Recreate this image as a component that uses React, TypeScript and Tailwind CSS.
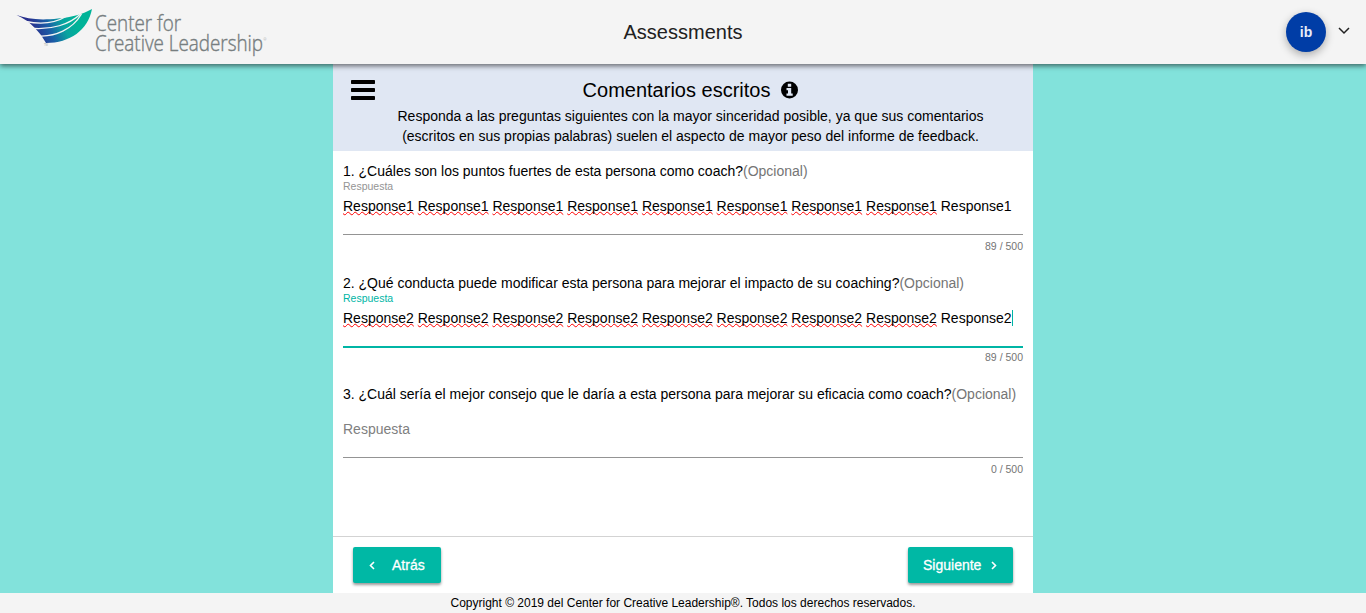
import React from "react";

function Logo() {
  return (
    <svg width="270" height="64" viewBox="0 0 270 64" className="ml-2 block" aria-label="Center for Creative Leadership">
      <defs>
        <linearGradient id="wing" gradientUnits="userSpaceOnUse" x1="27" y1="34" x2="66" y2="18">
          <stop offset="0" stopColor="#28308e" />
          <stop offset="0.35" stopColor="#1b5ca6" />
          <stop offset="0.7" stopColor="#08a3a0" />
          <stop offset="1" stopColor="#00b398" />
        </linearGradient>
      </defs>
      <path fill="url(#wing)" d="M8.500 15C19 19 32 20.500 50 18.500C64 17.500 75 14 84 9C80 30 62 43 38 43C32 32 22 21 8.500 15Z" />
      <g fill="none" stroke="#f4f4f4" strokeWidth="1.300">
        <path d="M18 21.500C33 24.500 48 22.500 58 16.500" />
        <path d="M26 28.500C43 29.500 61 25 72.500 14" />
        <path d="M32 36C47 36.500 64 30 73.500 14" />
      </g>
      <g fill="#777e80" fontFamily="'Open Sans', 'Noto Sans', sans-serif" fontWeight="300">
        <text x="87" y="31" fontSize="21.500" stroke="#777e80" strokeWidth="0.4" textLength="86" lengthAdjust="spacingAndGlyphs">Center for</text>
        <text x="87" y="50.500" fontSize="21.500" stroke="#777e80" strokeWidth="0.4" textLength="168" lengthAdjust="spacingAndGlyphs">Creative Leadership</text>
        <text x="255.200" y="41" fontSize="4">®</text>
        <text x="36" y="46" fontSize="3">TM</text>
      </g>
    </svg>
  );
}

function Header() {
  return (
    <header className="relative z-10 grid h-16 shrink-0 grid-cols-[1fr_auto_1fr] items-center bg-[#f4f4f4] shadow-[0_2px_5px_rgba(0,0,0,0.55)]">
      <Logo />
      <h1 className="text-[20px] leading-6 text-[#212121]">Assessments</h1>
      <div className="flex items-center justify-end pr-4">
        <span className="flex size-10 items-center justify-center rounded-full bg-[#003da6] text-[14px] font-bold text-[#e8edf7] shadow-[0_3px_8px_rgba(0,0,0,0.3)]">ib</span>
        <svg className="ml-3 block" width="12" height="12" viewBox="0 0 12 12" fill="none" stroke="#212121" strokeWidth="1.500">
          <path d="M1 2L6 7L11 2" />
        </svg>
      </div>
    </header>
  );
}

function MenuIcon() {
  return (
    <svg className="mt-4 ml-[18px] block shrink-0" width="24" height="20" viewBox="0 0 24 20">
      <rect width="24" height="4" rx="0.7" />
      <rect y="8" width="24" height="4" rx="0.7" />
      <rect y="16" width="24" height="4" rx="0.7" />
    </svg>
  );
}

function InfoIcon() {
  return (
    <svg className="ml-[11px] block" width="17" height="18" viewBox="0 0 17 18">
      <circle cx="8.500" cy="9" r="8.500" />
      <path fill="#e0e7f3" d="M6.800 2.800H10.200V5.800H6.800ZM5.500 7H10.200V12.500H11.700V14.800H5.500V12.500H7V9.200H5.500Z" />
    </svg>
  );
}

function Misspelled({ children }: { children: string }) {
  return (
    <span className="underline decoration-[#f00] decoration-wavy decoration-[0.5px] underline-offset-0 [text-decoration-skip-ink:none]">
      {children}
    </span>
  );
}

type QuestionProps = { question: string; word?: string; count: number; focused?: boolean };

function Question({ question, word, count, focused = false }: QuestionProps) {
  return (
    <section className="flex flex-col">
      <p className="h-5 leading-5 whitespace-nowrap">
        {question}
        <span className="text-[#757575]">(Opcional)</span>
      </p>
      <div className={`h-[15px] text-[10.5px] leading-[11px] ${focused ? "text-[#00b5a5]" : "text-[#949494]"}`}>
        {word ? "Respuesta" : ""}
      </div>
      <div className="flex h-[38px] items-start leading-5 whitespace-nowrap">
        {word ? (
          <span>
            {Array.from({ length: 8 }, (_, i) => (
              <React.Fragment key={i}>
                <Misspelled>{word}</Misspelled>{" "}
              </React.Fragment>
            ))}
            {word}
          </span>
        ) : (
          <span className="text-[#808080]">Respuesta</span>
        )}
        {focused && <span className="mt-0.5 h-4 w-px bg-[#00b5a5]" />}
      </div>
      <div className="h-0.5">
        <div className={focused ? "h-0.5 bg-[#00b5a5]" : "h-px bg-[#949494]"} />
      </div>
      <div className={`${focused ? "pt-[3px]" : "pt-1"} text-right text-[10.5px] leading-3 text-[#757575]`}>{count} / 500</div>
    </section>
  );
}

const button =
  "flex h-9 items-center rounded-[2px] bg-[#00b8a5] text-[14px] font-medium text-white shadow-[0_2px_3px_rgba(0,0,0,0.4)] [-webkit-text-stroke:0.3px_white]";

export default function App() {
  return (
    <div className="flex h-[613px] w-full flex-col overflow-hidden bg-[#82e2db] font-['Liberation_Sans',Arial,sans-serif] text-[14px] text-black">
      <Header />
      <main className="mx-auto flex min-h-0 w-[700px] flex-1 flex-col bg-white">
        <div className="flex h-[87px] shrink-0 bg-[#e0e7f3]">
          <MenuIcon />
          <div className="ml-[5px] w-[621px] pt-3.5 text-center">
            <h2 className="flex h-6 items-center justify-center text-[20px] leading-6">
              Comentarios escritos
              <InfoIcon />
            </h2>
            <p className="pt-1 leading-5">
              Responda a las preguntas siguientes con la mayor sinceridad posible, ya que sus comentarios
              <br />
              (escritos en sus propias palabras) suelen el aspecto de mayor peso del informe de feedback.
            </p>
          </div>
        </div>
        <div className="flex flex-1 flex-col gap-[21px] px-2.5 pt-2.5">
          <Question question="1. ¿Cuáles son los puntos fuertes de esta persona como coach?" word="Response1" count={89} />
          <Question question="2. ¿Qué conducta puede modificar esta persona para mejorar el impacto de su coaching?" word="Response2" count={89} focused />
          <Question question="3. ¿Cuál sería el mejor consejo que le daría a esta persona para mejorar su eficacia como coach?" count={0} />
        </div>
        <div className="flex h-[57px] shrink-0 items-start justify-between border-t border-[#d3d3d3] px-5 pt-2.5">
          <button className={`${button} w-[88px] pl-4`}>
            <svg width="6" height="9" viewBox="0 0 6 9" fill="none" stroke="currentColor" strokeWidth="1.600"><path d="M5 1L1.500 4.500L5 8" /></svg>
            <span className="ml-[17px]">Atrás</span>
          </button>
          <button className={`${button} w-[105px] pl-[15px]`}>
            <span>Siguiente</span>
            <svg className="ml-2.5" width="6" height="9" viewBox="0 0 6 9" fill="none" stroke="currentColor" strokeWidth="1.600"><path d="M1 1L4.500 4.500L1 8" /></svg>
          </button>
        </div>
      </main>
      <footer className="h-5 shrink-0 bg-[#f4f4f4] text-center text-[12px] leading-5">
        Copyright © 2019 del Center for Creative Leadership®. Todos los derechos reservados.
      </footer>
    </div>
  );
}
